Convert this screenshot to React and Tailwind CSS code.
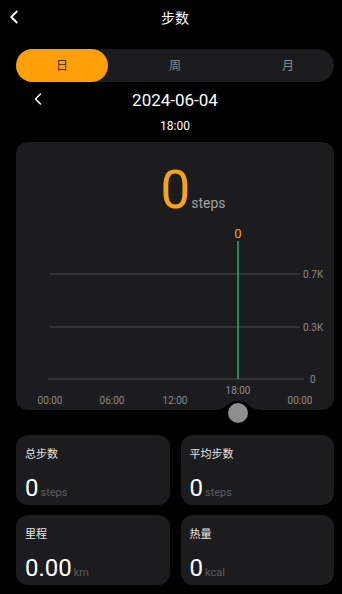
import { ChevronLeft } from 'lucide-react';

const font = { fontFamily: 'Roboto, "Noto Sans CJK SC", sans-serif' };

function StatCard({ label, value, unit }) {
  return (
    <div className="bg-[#1c1c1e] rounded-[12px] h-[70px] px-[9px] pt-[13px] flex flex-col justify-between pb-[2px]">
      <div className="text-[11px] text-[#e5e5e5] leading-[14px]">{label}</div>
      <div className="flex items-baseline">
        <span className="text-[24px] text-white leading-[30px]">{value}</span>
        <span className="text-[11px] text-[#5c5c5c] ml-[2px]">{unit}</span>
      </div>
    </div>
  );
}

function Chart() {
  const grid = [
    { y: 132, label: '0.7K' },
    { y: 185, label: '0.3K' },
  ];
  const xs = [
    { x: 34, t: '00:00' },
    { x: 96, t: '06:00' },
    { x: 159, t: '12:00' },
    { x: 284, t: '00:00' },
  ];
  return (
    <svg width="318" height="268" className="absolute left-0 top-0" style={font}>
      {grid.map((g) => (
        <g key={g.label}>
          <line x1="34" x2="284" y1={g.y} y2={g.y} stroke="#4a4a4c" strokeWidth="1" />
          <text x="287" y={g.y + 4} fontSize="10" fill="#8a8a8a">{g.label}</text>
        </g>
      ))}
      <line x1="32" x2="288" y1="237" y2="237" stroke="#4a4a4c" strokeWidth="1" />
      <text x="294" y="241" fontSize="10" fill="#8a8a8a">0</text>
      <line x1="222" x2="222" y1="99" y2="237" stroke="#2fd07a" strokeWidth="1.2" />
      <text x="222" y="96" fontSize="13" fill="#f5a623" textAnchor="middle">0</text>
      <text x="222" y="252" fontSize="10" fill="#8a8a8a" textAnchor="middle">18:00</text>
      {xs.map((l, i) => (
        <text key={i} x={l.x} y="262" fontSize="10" fill="#8a8a8a" textAnchor="middle">{l.t}</text>
      ))}
      <path d="M198 268 C212 268 210 259 222 259 C234 259 232 268 246 268 Z" fill="#000" />
    </svg>
  );
}

export default function App() {
  return (
    <div className="w-[342px] h-[594px] bg-black text-white overflow-hidden" style={font}>
      <div className="w-[350px]">
        <header className="relative h-[36px] flex items-center justify-center">
          <ChevronLeft className="absolute left-[3px] top-[6px]" size={22} strokeWidth={2} color="#fff" />
          <span className="text-[14px]">步数</span>
        </header>

        <div className="mx-[16px] mt-[13px] h-[33px] rounded-full bg-[#1c1c1e] flex items-center text-[12px]">
          <div className="w-[92px] h-full rounded-full bg-[#ff9f0a] text-[#3a2a10] flex items-center justify-center">日</div>
          <div className="flex-1 text-center text-[#8a8a8a]">周</div>
          <div className="w-[92px] text-center text-[#8a8a8a]">月</div>
        </div>

        <div className="relative h-[36px] flex items-center justify-center">
          <ChevronLeft className="absolute left-[28px] top-[7px]" size={20} strokeWidth={1.8} color="#fff" />
          <span className="text-[17px] leading-[20px]">2024-06-04</span>
        </div>
        <div className="text-center text-[12px] leading-[14px] mt-[1px]">18:00</div>

        <div className="relative mx-[16px] mt-[9px] h-[268px] rounded-[12px] bg-[#1c1c1e]">
          <div className="relative z-10 flex items-baseline justify-center pt-[22px] pl-[36px]">
            <span className="text-[53px] leading-[53px] text-[#f7a21b]">0</span>
            <span className="text-[14px] text-[#a0a0a0] ml-[1px]">steps</span>
          </div>
          <Chart />
          <div className="absolute left-[212px] top-[261px] w-[20px] h-[20px] rounded-full bg-[#8e8e8e]" />
        </div>

        <div className="grid grid-cols-2 gap-x-[11px] gap-y-[10px] mx-[16px] mt-[25px]">
          <StatCard label="总步数" value="0" unit="steps" />
          <StatCard label="平均步数" value="0" unit="steps" />
          <StatCard label="里程" value="0.00" unit="km" />
          <StatCard label="热量" value="0" unit="kcal" />
        </div>
      </div>
    </div>
  );
}
